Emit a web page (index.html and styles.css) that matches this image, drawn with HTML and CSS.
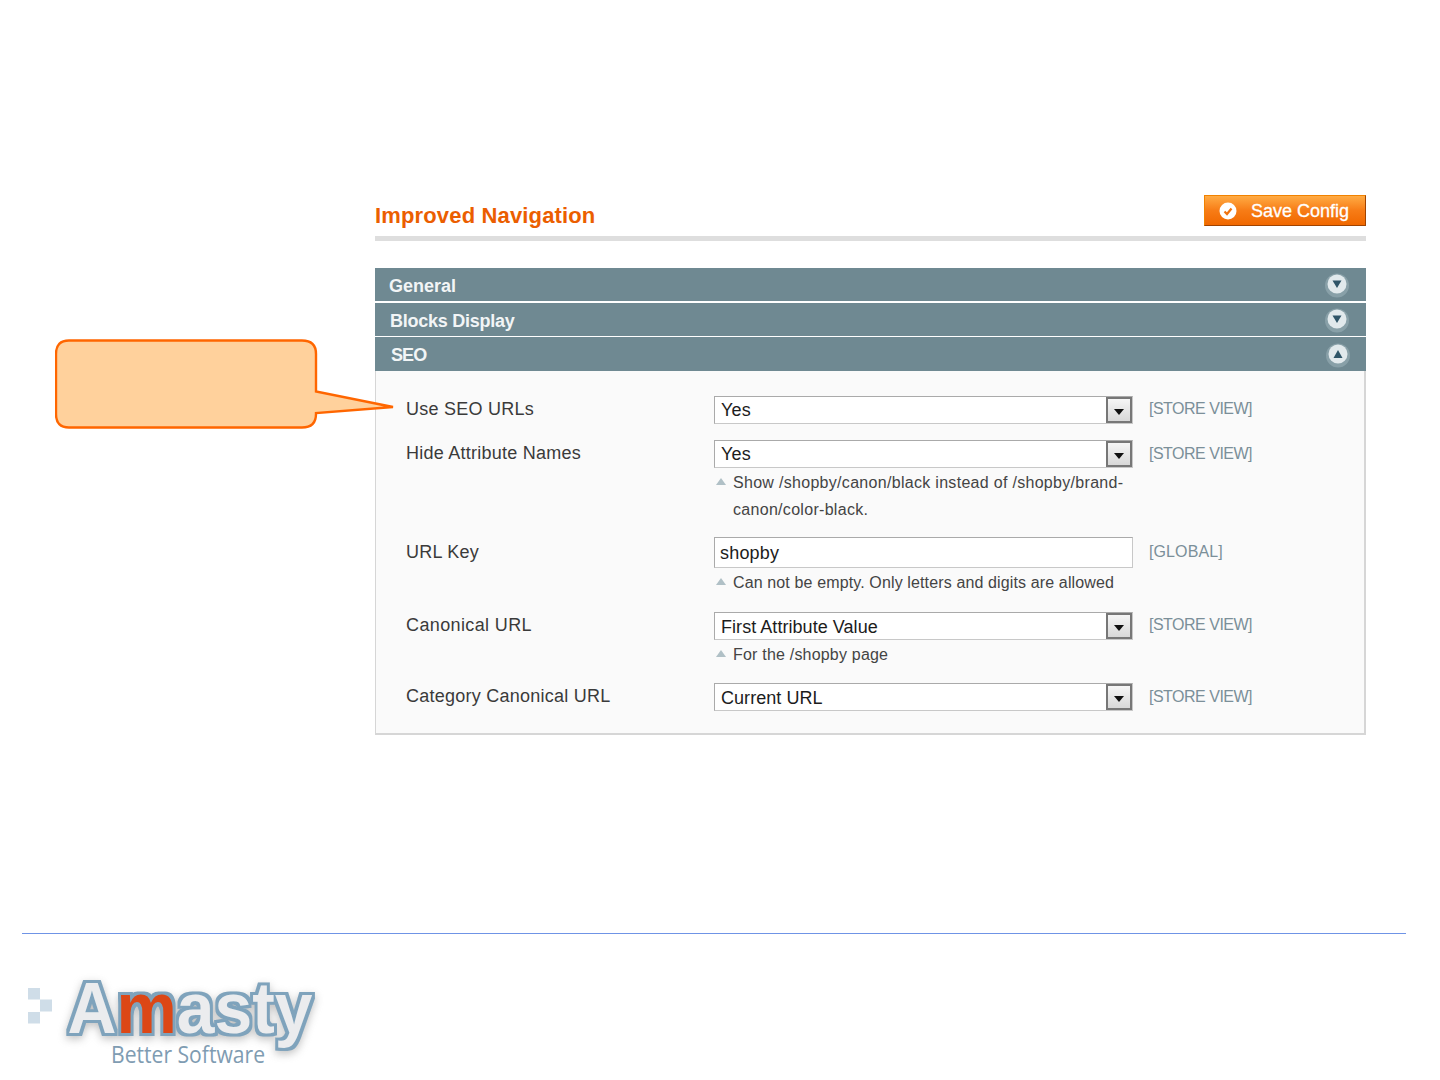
FILE: index.html
```html
<!DOCTYPE html>
<html lang="en">
<head>
<meta charset="utf-8">
<title>Improved Navigation</title>
<link rel="stylesheet" href="styles.css">
</head>
<body>
<div class="slide">
  <svg class="callout" width="350" height="100" viewBox="0 0 350 100" aria-hidden="true">
    <path d="M14 1.500H247Q261 1.500 261 15V52.500L338 68L261 74V75Q261 88.500 247 88.500H14Q1 88.500 1 75V15Q1 1.500 14 1.500Z" fill="#ffd19c" stroke="#ff6600" stroke-width="2.400"/>
  </svg>
  <main class="config">
    <header class="head">
      <h1 class="title">Improved Navigation</h1>
      <button class="save" type="button">
        <svg class="save-icon" width="18" height="18" viewBox="0 0 18 18" aria-hidden="true"><circle cx="9" cy="9" r="8.500" fill="#fff"/><path d="M5.500 9.500L8 12L12.500 6.500" fill="none" stroke="#f0730f" stroke-width="2.200"/></svg>
        <span>Save Config</span>
      </button>
    </header>
    <section class="bar"><span class="bar-t1">General</span>
      <svg class="tog" width="26" height="26" viewBox="0 0 26 26" aria-hidden="true"><circle cx="13" cy="13.500" r="12" fill="#88a0a8"/><circle cx="13" cy="12" r="9.500" fill="#e1e9ec"/><path d="M8.500 8.500H17.500L13 16Z" fill="#2f5568"/></svg>
    </section>
    <section class="bar bar2"><span class="bar-t1 bar-blocks">Blocks Display</span>
      <svg class="tog" width="26" height="26" viewBox="0 0 26 26" aria-hidden="true"><circle cx="13" cy="13.500" r="12" fill="#88a0a8"/><circle cx="13" cy="12" r="9.500" fill="#e1e9ec"/><path d="M8.500 8.500H17.500L13 16Z" fill="#2f5568"/></svg>
    </section>
    <section class="bar bar3"><span class="bar-t2">SEO</span>
      <svg class="tog tog-up" width="26" height="26" viewBox="0 0 26 26" aria-hidden="true"><circle cx="13" cy="13.500" r="12" fill="#88a0a8"/><circle cx="13" cy="12" r="9.500" fill="#e1e9ec"/><path d="M8.500 16H17.500L13 8Z" fill="#2f5568"/></svg>
    </section>
    <section class="panel">
      <div class="row r1">
        <div class="label">Use SEO URLs</div>
        <div class="field"><div class="select"><span>Yes</span><i class="arrow"></i></div></div>
        <div class="scope">[STORE VIEW]</div>
      </div>
      <div class="row r2">
        <div class="label">Hide Attribute Names</div>
        <div class="field"><div class="select"><span>Yes</span><i class="arrow"></i></div>
          <p class="note note-two">Show /shopby/canon/black instead of /shopby/brand-canon/color-black.</p></div>
        <div class="scope">[STORE VIEW]</div>
      </div>
      <div class="row r3">
        <div class="label">URL Key</div>
        <div class="field"><div class="input">shopby</div>
          <p class="note">Can not be empty. Only letters and digits are allowed</p></div>
        <div class="scope scope-g">[GLOBAL]</div>
      </div>
      <div class="row r4">
        <div class="label">Canonical URL</div>
        <div class="field"><div class="select"><span>First Attribute Value</span><i class="arrow"></i></div>
          <p class="note">For the /shopby page</p></div>
        <div class="scope">[STORE VIEW]</div>
      </div>
      <div class="row r5">
        <div class="label">Category Canonical URL</div>
        <div class="field"><div class="select"><span>Current URL</span><i class="arrow"></i></div></div>
        <div class="scope">[STORE VIEW]</div>
      </div>
    </section>
  </main>
  <footer class="foot">
    <svg class="logo" width="300" height="100" viewBox="0 0 300 100" role="img" aria-label="Amasty Better Software">
      <defs>
        <filter id="fat" x="-10%" y="-30%" width="120%" height="170%" color-interpolation-filters="sRGB">
          <feMorphology in="SourceAlpha" operator="dilate" radius="2.500" result="a"/>
          <feGaussianBlur in="a" stdDeviation="4" result="b"/>
          <feOffset in="b" dy="3" result="c"/>
          <feFlood flood-color="#777" flood-opacity=".45"/>
          <feComposite in2="c" operator="in" result="shadow"/>
          <feFlood flood-color="#7fa3bc"/>
          <feComposite in2="a" operator="in" result="outline"/>
          <feMerge result="m"><feMergeNode in="shadow"/><feMergeNode in="outline"/><feMergeNode in="SourceGraphic"/></feMerge>
          <feGaussianBlur in="m" stdDeviation=".5"/>
        </filter>
      </defs>
      <rect x="6" y="8" width="12" height="11.500" fill="#cfdde8"/><rect x="18" y="19.500" width="12" height="12" fill="#cfdde8"/><rect x="6" y="32" width="12" height="11.500" fill="#cfdde8"/>
      <text class="logo-main" x="45.500" y="53" filter="url(#fat)" textLength="245" lengthAdjust="spacingAndGlyphs">A<tspan class="logo-m">m</tspan>asty</text>
      <text class="logo-sub" x="89" y="83" textLength="154" lengthAdjust="spacingAndGlyphs">Better Software</text>
    </svg>
  </footer>
</div>
</body>
</html>
```
FILE: styles.css
```css
* { box-sizing: border-box; }
html, body { margin: 0; padding: 0; background: #fff; }
body { font-family: "Liberation Sans", Arial, sans-serif; color: #333; }
.slide { position: relative; width: 1440px; height: 1080px; overflow: hidden; padding-top: 195px; }
.callout { position: absolute; left: 55px; top: 339px; }
.config { width: 991px; margin-left: 375px; }
.head { display: flex; justify-content: space-between; align-items: flex-start; height: 46px; border-bottom: 5px solid #dedede; margin-bottom: 27px; }
.title { margin: 8px 0 0; font-size: 22px; line-height: 26px; font-weight: 700; color: #eb5e00; letter-spacing: .15px; }
.save { display: flex; align-items: center; width: 162px; height: 31px; padding: 0 0 0 14px; border: 1px solid #ed6502; border-color: #f18200 #a04300 #a04300 #f18200; background: linear-gradient(#ffab44, #f77c16 50%, #f06800); color: #fff; font: 700 18px/1 "Liberation Sans", Arial, sans-serif; }
.save span { margin-left: 14px; font-size: 18px; font-weight: 400; -webkit-text-stroke: .3px #fff; }
.save-icon { flex: none; }
.bar { display: flex; justify-content: space-between; align-items: center; height: 33px; margin-bottom: 2px; padding: 2px 16px 0 14px; background: #6f8992; color: #f2f5f6; font-size: 18px; font-weight: 700; }
.bar-t1 { position: relative; top: 1px; }
.bar-blocks { letter-spacing: -.25px; margin-left: 1px; }
.bar2 { margin-bottom: 1px; }
.bar3 { height: 34px; margin-bottom: 0; }
.bar-t2 { margin-left: 2px; letter-spacing: -.9px; }
.tog { margin-top: -2px; }
.tog-up { margin-right: -1px; margin-top: 0; }
.panel { height: 364px; padding-top: 25px; background: #fafafa; border: 1px solid #d6d6d6; border-top: 0; border-width: 0 2px 2px 1px; }
.row { display: grid; grid-template-columns: 308px 419px auto; column-gap: 0; padding-left: 30px; font-size: 18px; }
.r1 { height: 44px; }
.r2 { height: 97px; }
.r3 { height: 75px; }
.r4 { height: 71px; }
.r5 { height: 30px; }
.label { color: #3a3a3a; padding-top: 1px; line-height: 24px; letter-spacing: .25px; }
.r3 .label { padding-top: 3px; }
.r4 .label { letter-spacing: .38px; }
.select, .input { display: flex; align-items: center; justify-content: space-between; width: 419px; height: 28px; background: #fff; border: 1px solid #aaa; border-color: #aaa #c8c8c8 #c8c8c8 #aaa; color: #1c1c1c; font-size: 18px; letter-spacing: .2px; }
.select { padding-left: 6px; }
.r4 .select span, .r5 .select span { padding-top: 2px; letter-spacing: .05px; }
.input { padding: 2px 0 0 5px; height: 31px; }
.arrow { position: relative; display: block; flex: none; width: 26px; height: 26px; background: linear-gradient(#f6f6f6, #d8d8d8); border: 2px solid #777; }
.arrow::after { content: ""; position: absolute; left: 6px; top: 10px; border: 5px solid transparent; border-top: 6px solid #111; border-bottom: 0; }
.scope { padding: 2px 0 0 16px; line-height: 22px; font-size: 16px; color: #7b8f99; letter-spacing: -.5px; }
.r2 .scope, .r5 .scope { padding-top: 3px; }
.r3 .scope { padding-top: 4px; }
.scope-g { letter-spacing: .1px; }
.note { position: relative; margin: 0; padding: 1px 0 0 19px; width: 419px; font-size: 16px; line-height: 27px; color: #444; letter-spacing: .2px; }
.note-two { width: 410px; letter-spacing: .3px; }
.r3 .note { letter-spacing: .13px; }
.note::before { content: ""; position: absolute; left: 2px; top: 10px; border: 5px solid transparent; border-bottom: 7px solid #b0c0c6; border-top: 0; }
.foot { position: absolute; left: 22px; top: 933px; width: 1384px; border-top: 1px solid #6f94e6; }
.logo { position: absolute; top: 46px; left: 0; overflow: visible; }
.logo-main { font: 700 72px "Liberation Sans", Arial, sans-serif; fill: #ebecee; }
.logo-m { fill: #dc4716; }
.logo-sub { font: 400 23px "Open Sans", "Liberation Sans", sans-serif; fill: #7f9cb2; }
```
